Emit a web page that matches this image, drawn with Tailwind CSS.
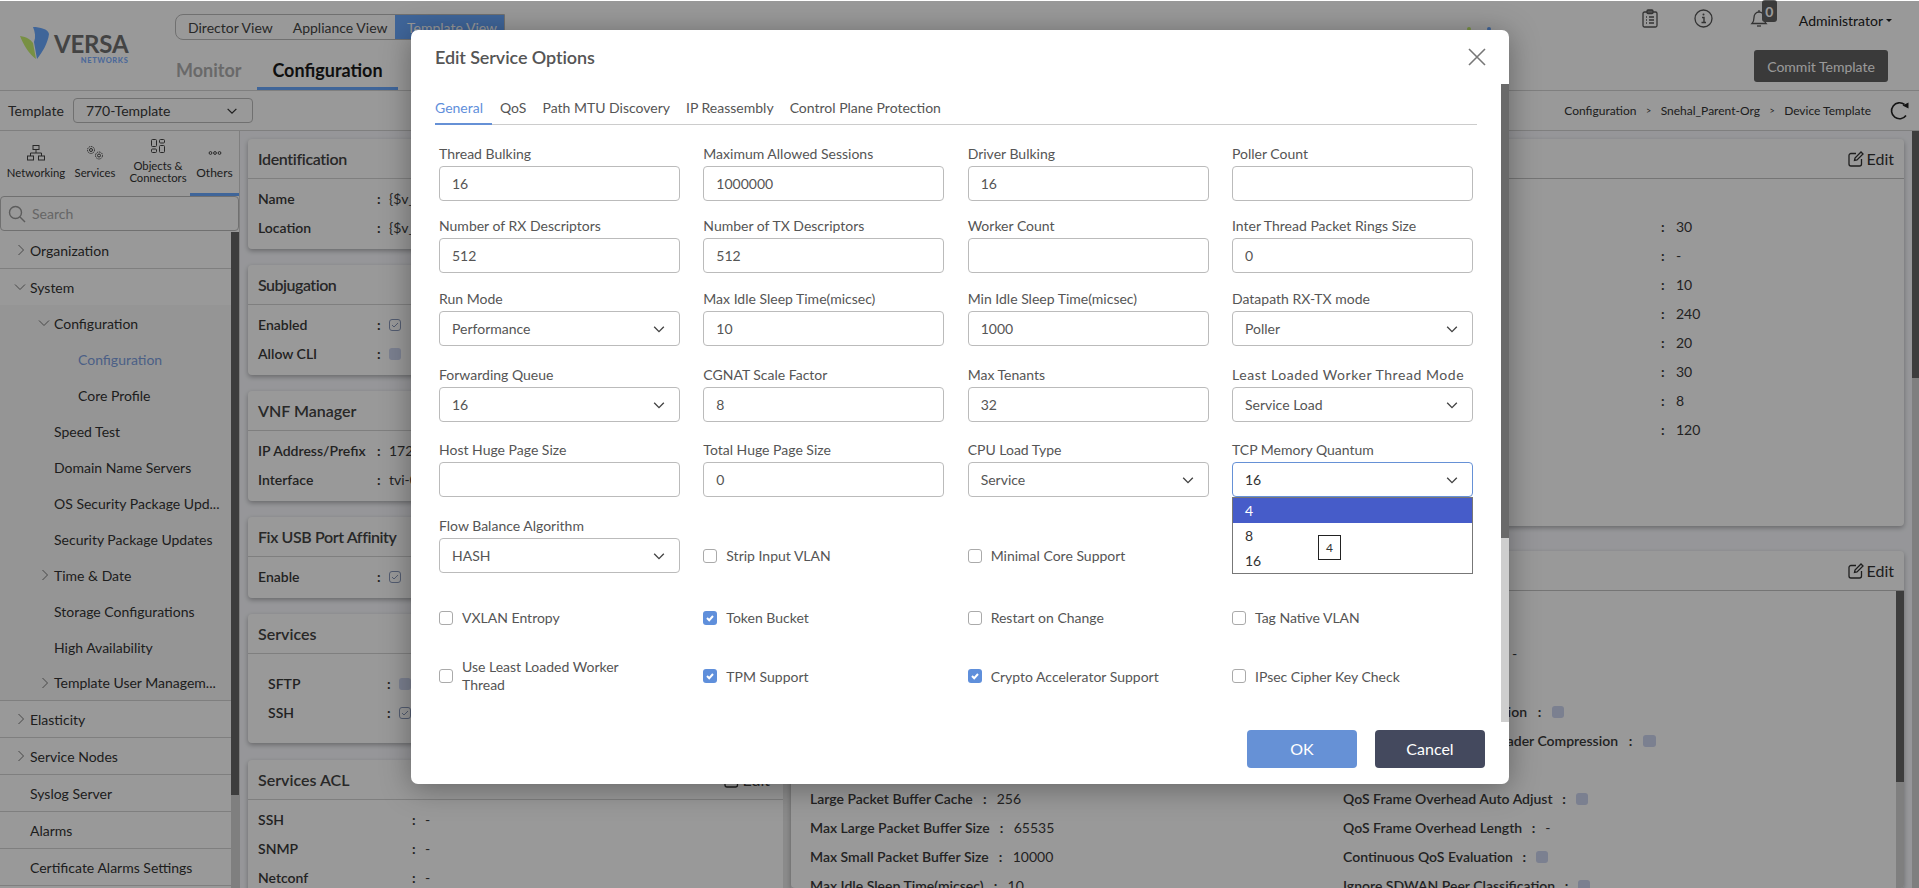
<!DOCTYPE html>
<html lang="en">
<head>
<meta charset="utf-8">
<title>Edit Service Options</title>
<script src="https://cdn.jsdelivr.net/npm/@tailwindcss/browser@4"></script>
</head>
<body class="m-0">
<div class="relative w-[1919px] h-[888px] overflow-hidden bg-[#fafbff] font-[Lato,sans-serif] text-[14px] text-[#3a3a3a]">

  <!-- header -->
  <header class="flex h-[91px] bg-white border-b border-[#d4d4d4] relative">
    <div class="w-[175px] shrink-0 pl-[20px] pt-[27px] flex items-start gap-[5px]">
      <svg class="w-[29px] h-[33px] shrink-0" viewBox="0 0 29 33" fill="none">
        <path d="M0 9 C7 10 11 13 13 16 L16 32 C9 27 3 17 0 9Z" fill="#c8f070"/>
        <path d="M13 0 C20 0 28 2 29 7 C28 16 22 26 17 32 L14 15 C16 10 15 5 13 0Z" fill="#69a8ff"/>
      </svg>
      <div class="flex flex-col items-end leading-none">
        <span class="text-[24px] font-bold text-[#707070] mt-[5px] tracking-[-0.2px]">VERSA</span>
        <span class="text-[7.5px] font-black text-[#7fb0ff] tracking-[0.6px] mt-[1px]">NETWORKS</span>
      </div>
    </div>
    <div class="flex flex-col justify-between pt-[14px]">
      <div class="flex h-[26px] w-[330px] border border-[#bbb] rounded-l-lg items-center overflow-hidden">
        <span class="pl-[12px] text-[#444]">Director View</span>
        <span class="pl-[20px] text-[#444]">Appliance View</span>
        <span class="ml-auto w-[109px] h-full bg-[#69a8ff] text-white flex items-center pl-[12px]">Template View</span>
      </div>
      <div class="flex items-end h-[36px]">
        <span class="w-[82px] pl-px pb-[6px] text-[18px] font-bold text-[#b0b0b0]">Monitor</span>
        <span class="w-[141px] h-[36px] flex items-center justify-center border-b-[3px] border-[#69a8ff] text-[18px] font-bold text-[#1a1a1a]">Configuration</span>
      </div>
    </div>
    <div class="ml-auto pr-[31px] flex flex-col items-end">
      <div class="flex items-center h-[50px] pb-[10px] -mr-[4px]">
        <svg class="w-[16px] h-[19px] mb-[4px]" viewBox="0 0 16 19" fill="none" stroke="#555" stroke-width="1.3"><rect x="1" y="3" width="14" height="15" rx="1.5"/><rect x="5" y="1" width="6" height="3.5" rx="1" fill="#888"/><path d="M4 8h1M7 8h5M4 11h1M7 11h5M4 14h1M7 14h5"/></svg>
        <svg class="w-[19px] h-[19px] ml-[36px] mb-[4px]" viewBox="0 0 19 19" fill="none" stroke="#555" stroke-width="1.3"><circle cx="9.5" cy="9.5" r="8.5"/><path d="M8 8.5h2v5M7.5 13.5h4.5" stroke-width="1.4"/><circle cx="9.5" cy="5.5" r="1" fill="#555" stroke="none"/></svg>
        <div class="relative ml-[36px] w-[20px] h-[20px] mb-[4px]">
          <svg class="w-[20px] h-[20px]" viewBox="0 0 20 20" fill="none" stroke="#555" stroke-width="1.3"><path d="M3 15.5c1.5-1.5 2-3 2-6 0-3 2-5.5 5-5.5s5 2.5 5 5.500c0 3 .5 4.500 2 6z"/><path d="M8 18h4"/><path d="M10 2v2"/></svg>
          <span class="absolute left-[13px] top-[-8px] w-[15px] h-[22px] rounded-[3px] bg-[#616161] text-white font-bold text-[14px] flex items-center justify-center">0</span>
        </div>
        <span class="ml-[30px] text-[#222]">Administrator</span>
        <span class="ml-[3px] w-0 h-0 border-x-[3px] border-x-transparent border-t-[3px] border-t-[#222]"></span>
      </div>
      <button class="w-[134px] h-[32px] rounded-[3px] bg-[#616161] text-white text-[14px]">Commit Template</button>
    </div>
    <span class="absolute left-[1467px] top-[27px] w-[4px] h-[4px] rounded-full bg-[#c8f070]"></span>
    <span class="absolute left-[1487px] top-[27px] w-[4px] h-[4px] rounded-full bg-[#69a8ff]"></span>
  </header>

  <!-- template bar -->
  <div class="flex items-center h-[40px] bg-white border-b border-[#d4d4d4] pl-[8px] pr-[9px]">
    <span>Template</span>
    <div class="ml-[9px] w-[180px] h-[25px] border border-[#bbb] rounded-[4px] flex items-center pl-[12px] pr-[13px] justify-between">
      <span>770-Template</span>
      <svg class="w-[14px] h-[14px]" viewBox="0 0 16 16" fill="none" stroke="#333" stroke-width="1.4"><path d="M3 5.500l5 5 5-5"/></svg>
    </div>
    <div class="ml-auto flex items-center text-[12px] text-[#333]">
      <span>Configuration</span><span class="mx-[9.5px] text-[9px]">&gt;</span>
      <span>Snehal_Parent-Org</span><span class="mx-[9.5px] text-[9px]">&gt;</span>
      <span>Device Template</span>
      <svg class="w-[20px] h-[20px] ml-[19px]" viewBox="0 0 20 20" fill="none" stroke="#222" stroke-width="1.6"><path d="M16 14.500A8 8 0 1 1 14.500 3.500"/><path d="M12.500 4.500l6-3v6z" fill="#222" stroke="none"/></svg>
    </div>
  </div>

  <!-- main -->
  <div class="flex h-[757px]">
    <!-- sidebar -->
    <aside class="w-[240px] shrink-0 border-r border-[#d4d4d4] flex flex-col bg-white">
      <div class="grid grid-cols-[72px_46px_72px_49px] h-[65px] relative text-[11.3px] leading-[12px] text-[#333] text-center">
        <div class="flex flex-col items-center pt-[14px]">
          <svg class="w-[18px] h-[16px]" viewBox="0 0 18 16" fill="none" stroke="#444"><rect x="6" y=".5" width="6" height="4"/><path d="M9 4.500V8M3.500 11V8h11v3"/><rect x=".5" y="11" width="6" height="4"/><rect x="11.500" y="11" width="6" height="4"/></svg>
          <span class="mt-[6px]">Networking</span>
        </div>
        <div class="flex flex-col items-center pt-[14px]">
          <svg class="w-[18px] h-[16px]" viewBox="0 0 18 16" fill="none" stroke="#444"><circle cx="5" cy="5" r="3.500" stroke-dasharray="1.500 .8"/><circle cx="5" cy="5" r="1.500"/><circle cx="13" cy="10.500" r="3.500" stroke-dasharray="1.500 .8"/><circle cx="13" cy="10.500" r="1.500"/></svg>
          <span class="mt-[6px]">Services</span>
        </div>
        <div class="flex flex-col items-center pt-[8px] pl-[8px]">
          <svg class="w-[14px] h-[14px]" viewBox="0 0 14 14" fill="none" stroke="#444"><rect x=".5" y=".5" width="5" height="7" rx="1"/><rect x=".5" y="10" width="5" height="3.500" rx="1"/><rect x="8.500" y=".5" width="5" height="3.500" rx="1"/><rect x="8.500" y="6.500" width="5" height="7" rx="1"/></svg>
          <span class="mt-[7px] whitespace-nowrap">Objects &amp;<br>Connectors</span>
        </div>
        <div class="flex flex-col items-center pt-[14px] border-b-[3px] border-[#69a8ff] text-[12px]">
          <svg class="w-[14px] h-[16px]" viewBox="0 0 14 16" fill="none" stroke="#444"><circle cx="2.500" cy="8" r="1.400"/><circle cx="7" cy="8" r="1.400"/><circle cx="11.500" cy="8" r="1.400"/></svg>
          <span class="mt-[6px]">Others</span>
        </div>
      </div>
      <div class="h-[35px] border border-[#bbb] rounded-[4px] flex items-center pl-[7px] gap-[6px] text-[#aaa]">
        <svg class="w-[18px] h-[18px]" viewBox="0 0 18 18" fill="none" stroke="#999" stroke-width="1.400"><circle cx="7.500" cy="7.500" r="6"/><path d="M12 12l5 5"/></svg>
        <span>Search</span>
      </div>
      <div class="flex flex-1 mt-px min-h-0">
        <div class="flex-1 text-[#333]">
          <div class="h-[37px] border-b border-[#d4d4d4] flex items-center relative pl-[30px]"><svg class="absolute left-[15px] w-[12px] h-[12px]" viewBox="0 0 12 12" fill="none" stroke="#777"><path d="M3.500 1l5 5-5 5"/></svg>Organization</div>
          <div class="h-[36px] flex items-center relative pl-[30px]"><svg class="absolute left-[14px] w-[12px] h-[12px]" viewBox="0 0 12 12" fill="none" stroke="#777"><path d="M1 3.500l5 5 5-5"/></svg>System</div>
          <div class="bg-[#f9f9f9] border-b border-[#d4d4d4]">
            <div class="h-[36px] flex items-center relative pl-[54px]"><svg class="absolute left-[38px] w-[12px] h-[12px]" viewBox="0 0 12 12" fill="none" stroke="#777"><path d="M1 3.500l5 5 5-5"/></svg>Configuration</div>
            <div class="h-[36px] flex items-center pl-[78px] text-[#7d9fe0]">Configuration</div>
            <div class="h-[36px] flex items-center pl-[78px]">Core Profile</div>
            <div class="h-[36px] flex items-center pl-[54px]">Speed Test</div>
            <div class="h-[36px] flex items-center pl-[54px]">Domain Name Servers</div>
            <div class="h-[36px] flex items-center pl-[54px] whitespace-nowrap">OS Security Package Upd...</div>
            <div class="h-[36px] flex items-center pl-[54px]">Security Package Updates</div>
            <div class="h-[36px] flex items-center relative pl-[54px]"><svg class="absolute left-[39px] w-[12px] h-[12px]" viewBox="0 0 12 12" fill="none" stroke="#777"><path d="M3.500 1l5 5-5 5"/></svg>Time &amp; Date</div>
            <div class="h-[36px] flex items-center pl-[54px]">Storage Configurations</div>
            <div class="h-[36px] flex items-center pl-[54px]">High Availability</div>
            <div class="h-[35px] flex items-center relative pl-[54px] whitespace-nowrap"><svg class="absolute left-[39px] w-[12px] h-[12px]" viewBox="0 0 12 12" fill="none" stroke="#777"><path d="M3.500 1l5 5-5 5"/></svg>Template User Managem...</div>
          </div>
          <div class="h-[37px] border-b border-[#d4d4d4] flex items-center relative pl-[30px]"><svg class="absolute left-[15px] w-[12px] h-[12px]" viewBox="0 0 12 12" fill="none" stroke="#777"><path d="M3.500 1l5 5-5 5"/></svg>Elasticity</div>
          <div class="h-[37px] border-b border-[#d4d4d4] flex items-center relative pl-[30px]"><svg class="absolute left-[15px] w-[12px] h-[12px]" viewBox="0 0 12 12" fill="none" stroke="#777"><path d="M3.500 1l5 5-5 5"/></svg>Service Nodes</div>
          <div class="h-[37px] border-b border-[#d4d4d4] flex items-center pl-[30px]">Syslog Server</div>
          <div class="h-[37px] border-b border-[#d4d4d4] flex items-center pl-[30px]">Alarms</div>
          <div class="h-[37px] border-b border-[#d4d4d4] flex items-center pl-[30px]">Certificate Alarms Settings</div>
        </div>
        <div class="w-[8px] flex flex-col bg-[#d4d4d4]"><div class="h-[563px] bg-[#666]"></div></div>
      </div>
    </aside>

    <!-- content -->
    <div class="flex flex-1 pl-[8px] pt-[8px]">
      <div class="w-[535px] flex flex-col gap-[16px] shrink-0">
        <section class="bg-white rounded-sm shadow-[0_2px_5px_rgba(0,0,0,0.3)] h-[110px] shrink-0">
          <div class="h-[40px] border-b border-[#d4d4d4] flex items-center pl-[10px] text-[16px] font-semibold text-[#444] tracking-[-0.35px]">Identification</div>
          <div class="pl-[10px] pt-[5px]">
            <div class="flex items-center h-[29px]"><span class="w-[119px] font-semibold">Name</span><span class="w-[12px] font-bold">:</span><span>{$v_Name}</span></div>
            <div class="flex items-center h-[29px]"><span class="w-[119px] font-semibold">Location</span><span class="w-[12px] font-bold">:</span><span>{$v_Location}</span></div>
          </div>
        </section>
        <section class="bg-white rounded-sm shadow-[0_2px_5px_rgba(0,0,0,0.3)] h-[110px] shrink-0">
          <div class="h-[40px] border-b border-[#d4d4d4] flex items-center pl-[10px] text-[16px] font-semibold text-[#444] tracking-[-0.5px]">Subjugation</div>
          <div class="pl-[10px] pt-[5px]">
            <div class="flex items-center h-[29px]"><span class="w-[119px] font-semibold">Enabled</span><span class="w-[12px] font-bold">:</span><span class="w-[12px] h-[12px] rounded-[3px] border border-[#8a9abb] flex items-center justify-center"><svg class="w-[8px] h-[8px]" viewBox="0 0 8 8" fill="none" stroke="#8a9abb"><path d="M1 4l2 2 4-4"/></svg></span></div>
            <div class="flex items-center h-[29px]"><span class="w-[119px] font-semibold">Allow CLI</span><span class="w-[12px] font-bold">:</span><span class="w-[12px] h-[12px] rounded-[3px] bg-[#cdd5f0]"></span></div>
          </div>
        </section>
        <section class="bg-white rounded-sm shadow-[0_2px_5px_rgba(0,0,0,0.3)] h-[110px] shrink-0">
          <div class="h-[40px] border-b border-[#d4d4d4] flex items-center pl-[10px] text-[16px] font-semibold text-[#444]">VNF Manager</div>
          <div class="pl-[10px] pt-[5px]">
            <div class="flex items-center h-[29px]"><span class="w-[119px] font-semibold">IP Address/Prefix</span><span class="w-[12px] font-bold">:</span><span>172.16.0.1/24</span></div>
            <div class="flex items-center h-[29px]"><span class="w-[119px] font-semibold">Interface</span><span class="w-[12px] font-bold">:</span><span>tvi-0/1</span></div>
          </div>
        </section>
        <section class="bg-white rounded-sm shadow-[0_2px_5px_rgba(0,0,0,0.3)] h-[81px] shrink-0">
          <div class="h-[40px] border-b border-[#d4d4d4] flex items-center pl-[10px] text-[16px] font-semibold text-[#444] tracking-[-0.4px]">Fix USB Port Affinity</div>
          <div class="pl-[10px] pt-[5px]">
            <div class="flex items-center h-[29px]"><span class="w-[119px] font-semibold">Enable</span><span class="w-[12px] font-bold">:</span><span class="w-[12px] h-[12px] rounded-[3px] border border-[#8a9abb] flex items-center justify-center"><svg class="w-[8px] h-[8px]" viewBox="0 0 8 8" fill="none" stroke="#8a9abb"><path d="M1 4l2 2 4-4"/></svg></span></div>
          </div>
        </section>
        <section class="bg-white rounded-sm shadow-[0_2px_5px_rgba(0,0,0,0.3)] h-[129px] shrink-0">
          <div class="h-[40px] border-b border-[#d4d4d4] flex items-center pl-[10px] text-[16px] font-semibold text-[#444]">Services</div>
          <div class="pl-[20px] pt-[15px]">
            <div class="flex items-center h-[29px]"><span class="w-[119px] font-semibold">SFTP</span><span class="w-[12px] font-bold">:</span><span class="w-[12px] h-[12px] rounded-[3px] bg-[#cdd5f0]"></span></div>
            <div class="flex items-center h-[29px]"><span class="w-[119px] font-semibold">SSH</span><span class="w-[12px] font-bold">:</span><span class="w-[12px] h-[12px] rounded-[3px] border border-[#8a9abb] flex items-center justify-center"><svg class="w-[8px] h-[8px]" viewBox="0 0 8 8" fill="none" stroke="#8a9abb"><path d="M1 4l2 2 4-4"/></svg></span></div>
          </div>
        </section>
        <section class="bg-white rounded-sm shadow-[0_2px_5px_rgba(0,0,0,0.3)] h-[160px] shrink-0 mt-px">
          <div class="h-[40px] border-b border-[#d4d4d4] flex items-center pl-[10px] pr-[13px] text-[16px] text-[#444]">
            <span class="font-semibold">Services ACL</span>
            <svg class="w-[16px] h-[16px] ml-auto mr-[3px]" viewBox="0 0 16 16" fill="none" stroke="#333" stroke-width="1.300"><path d="M8 2.500H3A2 2 0 0 0 1 4.500V13A2 2 0 0 0 3 15h8.500a2 2 0 0 0 2-2V8"/><path d="M6.500 9.500l.5-2.500L13 1l2 2-6 6z"/></svg>
            <span>Edit</span>
          </div>
          <div class="pl-[10px] pt-[5px]">
            <div class="flex items-center h-[29px]"><span class="w-[154px] font-semibold">SSH</span><span class="w-[13px] font-bold">:</span><span>-</span></div>
            <div class="flex items-center h-[29px]"><span class="w-[154px] font-semibold">SNMP</span><span class="w-[13px] font-bold">:</span><span>-</span></div>
            <div class="flex items-center h-[29px]"><span class="w-[154px] font-semibold">Netconf</span><span class="w-[13px] font-bold">:</span><span>-</span></div>
          </div>
        </section>
      </div>
      <div class="w-[8px] shrink-0 bg-[#e6e6e6] -mt-[8px] self-stretch"></div>
      <div class="w-[1113px] shrink-0 flex flex-col gap-[25px]">
        <section class="bg-white rounded-sm shadow-[0_2px_5px_rgba(0,0,0,0.3)] h-[387px] shrink-0">
          <div class="h-[40px] border-b border-[#c4c4c4] flex items-center justify-end pr-[10px] text-[16px] gap-[3px] text-[#333]">
            <svg class="w-[16px] h-[16px]" viewBox="0 0 16 16" fill="none" stroke="#333" stroke-width="1.300"><path d="M8 2.500H3A2 2 0 0 0 1 4.500V13A2 2 0 0 0 3 15h8.500a2 2 0 0 0 2-2V8"/><path d="M6.500 9.500l.5-2.500L13 1l2 2-6 6z"/></svg>
            <span>Edit</span>
          </div>
          <div class="pt-[33px] pl-[870px]">
            <div class="flex items-center h-[29px]"><span class="w-[15px] font-bold">:</span><span>30</span></div>
            <div class="flex items-center h-[29px]"><span class="w-[15px] font-bold">:</span><span>-</span></div>
            <div class="flex items-center h-[29px]"><span class="w-[15px] font-bold">:</span><span>10</span></div>
            <div class="flex items-center h-[29px]"><span class="w-[15px] font-bold">:</span><span>240</span></div>
            <div class="flex items-center h-[29px]"><span class="w-[15px] font-bold">:</span><span>20</span></div>
            <div class="flex items-center h-[29px]"><span class="w-[15px] font-bold">:</span><span>30</span></div>
            <div class="flex items-center h-[29px]"><span class="w-[15px] font-bold">:</span><span>8</span></div>
            <div class="flex items-center h-[29px]"><span class="w-[15px] font-bold">:</span><span>120</span></div>
          </div>
        </section>
        <section class="bg-white rounded-sm shadow-[0_2px_5px_rgba(0,0,0,0.3)] flex-1 min-h-0 flex flex-col overflow-hidden">
          <div class="h-[40px] shrink-0 border-b border-[#c4c4c4] flex items-center justify-end pr-[10px] text-[16px] gap-[3px] text-[#333]">
            <svg class="w-[16px] h-[16px]" viewBox="0 0 16 16" fill="none" stroke="#333" stroke-width="1.300"><path d="M8 2.500H3A2 2 0 0 0 1 4.500V13A2 2 0 0 0 3 15h8.500a2 2 0 0 0 2-2V8"/><path d="M6.500 9.500l.5-2.500L13 1l2 2-6 6z"/></svg>
            <span>Edit</span>
          </div>
          <div class="flex flex-1 min-h-0">
            <div class="flex-1 grid grid-cols-[533px_1fr] grid-rows-[repeat(9,29px)] pl-[19px] pt-[48px]">
              <div></div><div class="flex items-center whitespace-nowrap"><span class="w-[169px]"></span><span>-</span></div>
              <div></div><div></div>
              <div></div><div class="flex items-center whitespace-nowrap"><span class="w-[184px] font-semibold text-right">Fragmentation</span><span class="w-[25px] font-bold text-center">:</span><span class="w-[12px] h-[12px] rounded-[3px] bg-[#cdd5f0]"></span></div>
              <div></div><div class="flex items-center whitespace-nowrap"><span class="w-[275px] font-semibold text-right">TCP Header Compression</span><span class="w-[25px] font-bold text-center">:</span><span class="w-[13px] h-[12px] rounded-[3px] bg-[#cdd5f0]"></span></div>
              <div></div><div></div>
              <div class="flex items-center whitespace-nowrap"><span class="font-semibold">Large Packet Buffer Cache</span><span class="w-[24px] font-bold text-center">:</span><span>256</span></div>
              <div class="flex items-center whitespace-nowrap"><span class="font-semibold">QoS Frame Overhead Auto Adjust</span><span class="w-[23px] font-bold text-center">:</span><span class="w-[12px] h-[12px] rounded-[3px] bg-[#cdd5f0]"></span></div>
              <div class="flex items-center whitespace-nowrap"><span class="font-semibold">Max Large Packet Buffer Size</span><span class="w-[24px] font-bold text-center">:</span><span>65535</span></div>
              <div class="flex items-center whitespace-nowrap"><span class="font-semibold">QoS Frame Overhead Length</span><span class="w-[23px] font-bold text-center">:</span><span>-</span></div>
              <div class="flex items-center whitespace-nowrap"><span class="font-semibold">Max Small Packet Buffer Size</span><span class="w-[24px] font-bold text-center">:</span><span>10000</span></div>
              <div class="flex items-center whitespace-nowrap"><span class="font-semibold">Continuous QoS Evaluation</span><span class="w-[23px] font-bold text-center">:</span><span class="w-[12px] h-[12px] rounded-[3px] bg-[#cdd5f0]"></span></div>
              <div class="flex items-center whitespace-nowrap"><span class="font-semibold">Max Idle Sleep Time(micsec)</span><span class="w-[24px] font-bold text-center">:</span><span>10</span></div>
              <div class="flex items-center whitespace-nowrap"><span class="font-semibold">Ignore SDWAN Peer Classification</span><span class="w-[23px] font-bold text-center">:</span><span class="w-[12px] h-[12px] rounded-[3px] bg-[#cdd5f0]"></span></div>
            </div>
            <div class="w-[8px] bg-[#d4d4d4]"><div class="h-[191px] bg-[#666]"></div></div>
          </div>
        </section>
      </div>
      <div class="w-[8px] shrink-0"></div>
      <div class="w-[7px] shrink-0 -mt-[8px] bg-[#d4d4d4]"><div class="h-[247px] bg-[#666]"></div></div>
    </div>
  </div>

  <!-- backdrop -->
  <div class="absolute inset-x-0 bottom-0 top-px bg-black/40"></div>

  <!-- modal -->
  <div class="absolute left-[411px] top-[30px] w-[1098px] h-[754px] bg-white rounded-[7px] shadow-[0_4px_30px_rgba(0,0,0,0.35)] flex flex-col text-[#555]">
    <div class="h-[54px] shrink-0 flex items-center justify-between pl-[24px] pr-[23px]">
      <h2 class="text-[18px] font-semibold text-[#555] tracking-[-0.1px]">Edit Service Options</h2>
      <svg class="w-[18px] h-[18px]" viewBox="0 0 18 18" fill="none" stroke="#777" stroke-width="1.600"><path d="M1 1l16 16M17 1L1 17"/></svg>
    </div>
    <div class="h-[638px] shrink-0 flex">
      <div class="flex-1 pl-[24px] pr-[24px]">
        <div class="flex h-[41px] border-b border-[#ccc] gap-[16px] items-start pt-[13px]">
          <span class="relative h-[27px] w-[41px] text-[#5f8fdb]">General<span class="absolute left-0 -bottom-px w-[57px] h-[2px] bg-[#6691d6]"></span></span>
          <span class="ml-[8px]">QoS</span>
          <span>Path MTU Discovery</span>
          <span>IP Reassembly</span>
          <span>Control Plane Protection</span>
        </div>
        <div class="pl-[4px] pt-[19px]">
          <!-- row 1 -->
          <div class="grid grid-cols-[repeat(4,241px)] gap-x-[23.33px] mb-[15px]">
            <div><div class="h-[22px] leading-[20px]">Thread Bulking</div><input readonly value="16" class="w-full h-[35px] border border-[#bbb] rounded-[4px] px-[12px] outline-none"></div>
            <div><div class="h-[22px] leading-[20px]">Maximum Allowed Sessions</div><input readonly value="1000000" class="w-full h-[35px] border border-[#bbb] rounded-[4px] px-[12px] outline-none"></div>
            <div><div class="h-[22px] leading-[20px]">Driver Bulking</div><input readonly value="16" class="w-full h-[35px] border border-[#bbb] rounded-[4px] px-[12px] outline-none"></div>
            <div><div class="h-[22px] leading-[20px]">Poller Count</div><input readonly class="w-full h-[35px] border border-[#bbb] rounded-[4px] px-[12px] outline-none"></div>
          </div>
          <!-- row 2 -->
          <div class="grid grid-cols-[repeat(4,241px)] gap-x-[23.33px] mb-[16px]">
            <div><div class="h-[22px] leading-[20px]">Number of RX Descriptors</div><input readonly value="512" class="w-full h-[35px] border border-[#bbb] rounded-[4px] px-[12px] outline-none"></div>
            <div><div class="h-[22px] leading-[20px]">Number of TX Descriptors</div><input readonly value="512" class="w-full h-[35px] border border-[#bbb] rounded-[4px] px-[12px] outline-none"></div>
            <div><div class="h-[22px] leading-[20px]">Worker Count</div><input readonly class="w-full h-[35px] border border-[#bbb] rounded-[4px] px-[12px] outline-none"></div>
            <div><div class="h-[22px] leading-[20px]">Inter Thread Packet Rings Size</div><input readonly value="0" class="w-full h-[35px] border border-[#bbb] rounded-[4px] px-[12px] outline-none"></div>
          </div>
          <!-- row 3 -->
          <div class="grid grid-cols-[repeat(4,241px)] gap-x-[23.33px] mb-[19px]">
            <div><div class="h-[22px] leading-[20px]">Run Mode</div><div class="h-[35px] border border-[#bbb] rounded-[4px] pl-[12px] pr-[13px] flex items-center justify-between"><span>Performance</span><svg class="w-[14px] h-[14px]" viewBox="0 0 16 16" fill="none" stroke="#444" stroke-width="1.600"><path d="M2.500 5.500l5.500 5.500 5.500-5.500"/></svg></div></div>
            <div><div class="h-[22px] leading-[20px]">Max Idle Sleep Time(micsec)</div><input readonly value="10" class="w-full h-[35px] border border-[#bbb] rounded-[4px] px-[12px] outline-none"></div>
            <div><div class="h-[22px] leading-[20px]">Min Idle Sleep Time(micsec)</div><input readonly value="1000" class="w-full h-[35px] border border-[#bbb] rounded-[4px] px-[12px] outline-none"></div>
            <div><div class="h-[22px] leading-[20px]">Datapath RX-TX mode</div><div class="h-[35px] border border-[#bbb] rounded-[4px] pl-[12px] pr-[13px] flex items-center justify-between"><span>Poller</span><svg class="w-[14px] h-[14px]" viewBox="0 0 16 16" fill="none" stroke="#444" stroke-width="1.600"><path d="M2.500 5.500l5.500 5.500 5.500-5.500"/></svg></div></div>
          </div>
          <!-- row 4 -->
          <div class="grid grid-cols-[repeat(4,241px)] gap-x-[23.33px] mb-[18px]">
            <div><div class="h-[22px] leading-[20px]">Forwarding Queue</div><div class="h-[35px] border border-[#bbb] rounded-[4px] pl-[12px] pr-[13px] flex items-center justify-between"><span>16</span><svg class="w-[14px] h-[14px]" viewBox="0 0 16 16" fill="none" stroke="#444" stroke-width="1.600"><path d="M2.500 5.500l5.500 5.500 5.500-5.500"/></svg></div></div>
            <div><div class="h-[22px] leading-[20px]">CGNAT Scale Factor</div><input readonly value="8" class="w-full h-[35px] border border-[#bbb] rounded-[4px] px-[12px] outline-none"></div>
            <div><div class="h-[22px] leading-[20px]">Max Tenants</div><input readonly value="32" class="w-full h-[35px] border border-[#bbb] rounded-[4px] px-[12px] outline-none"></div>
            <div><div class="h-[22px] leading-[20px] whitespace-nowrap tracking-[0.55px]">Least Loaded Worker Thread Mode</div><div class="h-[35px] border border-[#bbb] rounded-[4px] pl-[12px] pr-[13px] flex items-center justify-between"><span>Service Load</span><svg class="w-[14px] h-[14px]" viewBox="0 0 16 16" fill="none" stroke="#444" stroke-width="1.600"><path d="M2.500 5.500l5.500 5.500 5.500-5.500"/></svg></div></div>
          </div>
          <!-- row 5 -->
          <div class="grid grid-cols-[repeat(4,241px)] gap-x-[23.33px] mb-[19px]">
            <div><div class="h-[22px] leading-[20px]">Host Huge Page Size</div><input readonly class="w-full h-[35px] border border-[#bbb] rounded-[4px] px-[12px] outline-none"></div>
            <div><div class="h-[22px] leading-[20px]">Total Huge Page Size</div><input readonly value="0" class="w-full h-[35px] border border-[#bbb] rounded-[4px] px-[12px] outline-none"></div>
            <div><div class="h-[22px] leading-[20px]">CPU Load Type</div><div class="h-[35px] border border-[#bbb] rounded-[4px] pl-[12px] pr-[13px] flex items-center justify-between"><span>Service</span><svg class="w-[14px] h-[14px]" viewBox="0 0 16 16" fill="none" stroke="#444" stroke-width="1.600"><path d="M2.500 5.500l5.500 5.500 5.500-5.500"/></svg></div></div>
            <div class="relative z-10"><div class="h-[22px] leading-[20px]">TCP Memory Quantum</div><div class="h-[35px] border border-[#6691d6] rounded-[4px] pl-[12px] pr-[13px] flex items-center justify-between"><span class="text-[#333]">16</span><svg class="w-[14px] h-[14px]" viewBox="0 0 16 16" fill="none" stroke="#444" stroke-width="1.600"><path d="M2.500 5.500l5.500 5.500 5.500-5.500"/></svg></div>
              <div class="absolute left-0 top-[57px] w-[241px] h-[77px] border border-[#777] bg-white text-[#333]">
                <div class="h-[25px] bg-[#465cc9] text-white flex items-center pl-[12px]">4</div>
                <div class="h-[25px] flex items-center pl-[12px]">8</div>
                <div class="h-[25px] flex items-center pl-[12px]">16</div>
                <div class="absolute left-[85px] top-[37px] w-[23px] h-[25px] border border-[#222] bg-white text-[12px] flex items-center justify-center">4</div>
              </div>
            </div>
          </div>
          <!-- row 6 -->
          <div class="grid grid-cols-[repeat(4,241px)] gap-x-[23.33px] items-end mb-[34px]">
            <div><div class="h-[22px] leading-[20px]">Flow Balance Algorithm</div><div class="h-[35px] border border-[#bbb] rounded-[4px] pl-[12px] pr-[13px] flex items-center justify-between"><span>HASH</span><svg class="w-[14px] h-[14px]" viewBox="0 0 16 16" fill="none" stroke="#444" stroke-width="1.600"><path d="M2.500 5.500l5.500 5.500 5.500-5.500"/></svg></div></div>
            <label class="h-[35px] flex items-center gap-[9px]"><span class="w-[14px] h-[14px] rounded-[3px] border border-[#aaa] shrink-0"></span>Strip Input VLAN</label>
            <label class="h-[35px] flex items-center gap-[9px]"><span class="w-[14px] h-[14px] rounded-[3px] border border-[#aaa] shrink-0"></span>Minimal Core Support</label>
            <div></div>
          </div>
          <!-- row 7 -->
          <div class="grid grid-cols-[repeat(4,241px)] gap-x-[23.33px] h-[20px] items-center mb-[31px]">
            <label class="flex items-center gap-[9px]"><span class="w-[14px] h-[14px] rounded-[3px] border border-[#aaa] shrink-0"></span>VXLAN Entropy</label>
            <label class="flex items-center gap-[9px]"><span class="w-[14px] h-[14px] rounded-[3px] bg-[#5f8fdb] shrink-0 flex items-center justify-center"><svg class="w-[10px] h-[10px]" viewBox="0 0 10 10" fill="none" stroke="#fff" stroke-width="2"><path d="M2 5l2.200 2.200L8 3"/></svg></span>Token Bucket</label>
            <label class="flex items-center gap-[9px]"><span class="w-[14px] h-[14px] rounded-[3px] border border-[#aaa] shrink-0"></span>Restart on Change</label>
            <label class="flex items-center gap-[9px]"><span class="w-[14px] h-[14px] rounded-[3px] border border-[#aaa] shrink-0"></span>Tag Native VLAN</label>
          </div>
          <!-- row 8 -->
          <div class="grid grid-cols-[repeat(4,241px)] gap-x-[23.33px] items-center">
            <label class="flex items-center gap-[9px]"><span class="w-[14px] h-[14px] rounded-[3px] border border-[#aaa] shrink-0"></span><span class="w-[170px] leading-[18px]">Use Least Loaded Worker Thread</span></label>
            <label class="flex items-center gap-[9px]"><span class="w-[14px] h-[14px] rounded-[3px] bg-[#5f8fdb] shrink-0 flex items-center justify-center"><svg class="w-[10px] h-[10px]" viewBox="0 0 10 10" fill="none" stroke="#fff" stroke-width="2"><path d="M2 5l2.200 2.200L8 3"/></svg></span>TPM Support</label>
            <label class="flex items-center gap-[9px]"><span class="w-[14px] h-[14px] rounded-[3px] bg-[#5f8fdb] shrink-0 flex items-center justify-center"><svg class="w-[10px] h-[10px]" viewBox="0 0 10 10" fill="none" stroke="#fff" stroke-width="2"><path d="M2 5l2.200 2.200L8 3"/></svg></span>Crypto Accelerator Support</label>
            <label class="flex items-center gap-[9px]"><span class="w-[14px] h-[14px] rounded-[3px] border border-[#aaa] shrink-0"></span>IPsec Cipher Key Check</label>
          </div>
        </div>
      </div>
      <div class="w-[8px] shrink-0 bg-[#cecece]"><div class="h-[454px] bg-[#6a6a6a]"></div></div>
    </div>
    <div class="flex justify-end gap-[18px] pt-[8px] pr-[24px]">
      <button class="w-[110px] h-[38px] rounded-[4px] bg-[#6691d6] text-white text-[16px]">OK</button>
      <button class="w-[110px] h-[38px] rounded-[4px] bg-[#44495e] text-white text-[16px]">Cancel</button>
    </div>
  </div>
</div>
</body>
</html>
